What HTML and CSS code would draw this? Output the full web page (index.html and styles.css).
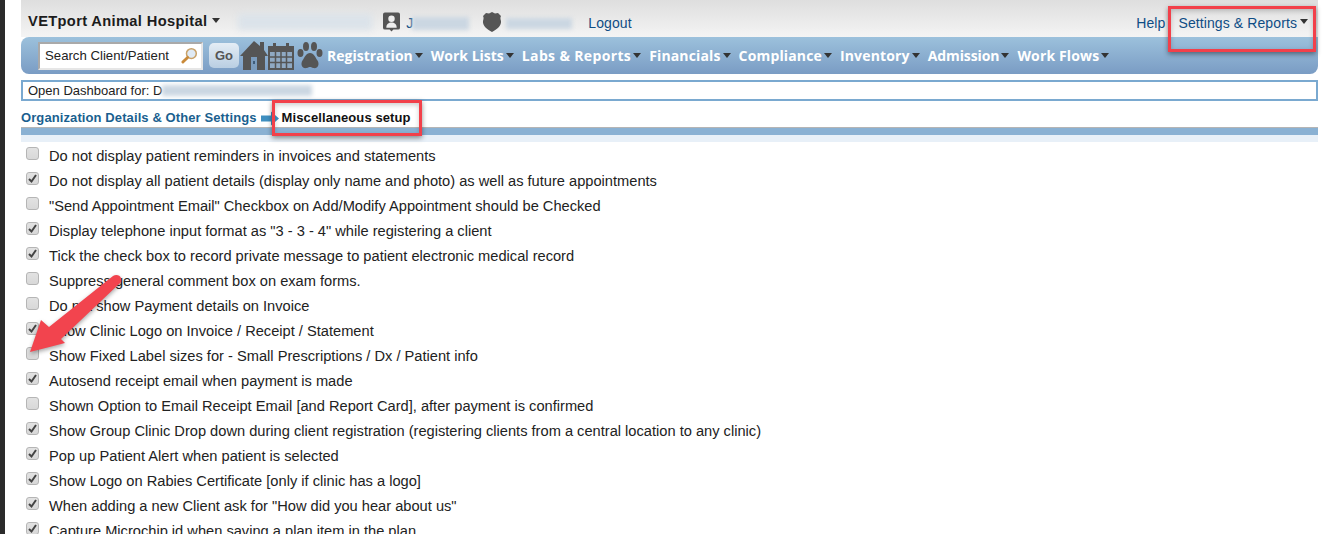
FILE: index.html
```html
<!DOCTYPE html>
<html lang="en">
<head>
  <meta charset="UTF-8">
  <title>VETport - Miscellaneous setup</title>
  <link rel="stylesheet" href="styles.css">
</head>
<body>
  <div class="page">
    <!-- Top bar -->
    <div class="topbar">
      <span class="clinic">VETport Animal Hospital</span>
      <span class="caret caret-top"></span>
      <span class="smudge smudge-date"></span>
      <svg class="icon-user" viewBox="0 0 18 20"><path fill="#555" d="M2 0h14a2 2 0 0 1 2 2v14a2 2 0 0 1-2 2h-5l-2 2-2-2H2a2 2 0 0 1-2-2V2a2 2 0 0 1 2-2z"/><circle cx="9" cy="6.500" r="3.400" fill="#eee"/><path fill="#eee" d="M3.500 16c0-4 2.500-5.500 5.500-5.500s5.500 1.500 5.500 5.500z"/></svg>
      <span class="link link-initial">J</span>
      <span class="smudge smudge-user"></span>
      <svg class="icon-shield" viewBox="0 0 20 20"><path fill="#555" d="M10 0l3 1.500 3-.5 3 3c-1 2-.5 3 0 5 .5 4-3 8-9 11C4 17 .5 13 1 9c.5-2 1-3 0-5l3-3 3 .5z"/></svg>
      <span class="smudge smudge-doctor"></span>
      <a class="link link-logout">Logout</a>
      <a class="link link-help">Help</a>
      <a class="link link-settings">Settings &amp; Reports</a>
      <span class="caret caret-settings"></span>
    </div>

    <!-- Main navigation -->
    <div class="navbar">
      <div class="search-box">
        <span>Search Client/Patient</span>
        <svg class="icon-search" viewBox="0 0 18 18"><circle cx="11" cy="7" r="5.200" fill="#dfeaf5" stroke="#c9a26a" stroke-width="1.600"/><path d="M7 11l-5 5" stroke="#c98a3a" stroke-width="3" stroke-linecap="round"/></svg>
      </div>
      <button class="go-btn">Go</button>
      <svg class="icon-home" viewBox="0 0 28 29"><path fill="#555" d="M14 0l6 5V1h4v8l4 6h-3v14H3V15H0z"/><path fill="#7b9cbd" d="M11 16h6v13h-6z"/><path fill="#3f5d7a" d="M13 20h2v3h-2z"/></svg>
      <svg class="icon-cal" viewBox="0 0 26 28"><path fill="#555" d="M0 4h5V1h3v3h10V1h3v3h5v24H0z"/><path fill="#8fa9c3" d="M2 10h22v16H2z"/><path stroke="#555" stroke-width="1.500" d="M2 15h22M2 20.500h22M7.500 10v16M13 10v16M18.500 10v16"/></svg>
      <svg class="icon-paw" viewBox="0 0 26 28"><g fill="#555"><ellipse cx="3.500" cy="11" rx="3" ry="4"/><ellipse cx="9" cy="4.500" rx="3" ry="4.500"/><ellipse cx="17" cy="4.500" rx="3" ry="4.500"/><ellipse cx="22.500" cy="11" rx="3" ry="4"/><path d="M13 11c4 0 5 4 7.500 7.500 2.500 4 0 8.500-4 7.500-2-.5-2.500-1-3.500-1s-1.500.5-3.500 1c-4 1-6.500-3.500-4-7.500C8 15 9 11 13 11z"/></g></svg>
      <a class="nav-item">Registration</a>
      <a class="nav-item">Work Lists</a>
      <a class="nav-item nav-wide">Labs &amp; Reports</a>
      <a class="nav-item nav-loose">Financials</a>
      <a class="nav-item nav-loose">Compliance</a>
      <a class="nav-item nav-loose">Inventory</a>
      <a class="nav-item nav-tight">Admission</a>
      <a class="nav-item nav-loose">Work Flows</a>
    </div>

    <!-- Patient dashboard -->
    <div class="dashboard">
      <span>Open Dashboard for: D</span>
      <span class="smudge smudge-patient"></span>
    </div>

    <!-- Breadcrumb -->
    <div class="breadcrumb">
      <a class="crumb-link">Organization Details &amp; Other Settings</a>
      <svg class="crumb-arrow" viewBox="0 0 18 14"><path fill="#3f8fc0" d="M0 4h10V0l8 7-8 7v-4H0z"/></svg>
      <span class="crumb-current">Miscellaneous setup</span>
    </div>
    <div class="section-bar"></div>

    <!-- Settings list -->
    <ul class="settings">
      <li><input type="checkbox"><span>Do not display patient reminders in invoices and statements</span></li>
      <li><input type="checkbox" checked><span>Do not display all patient details (display only name and photo) as well as future appointments</span></li>
      <li><input type="checkbox"><span>"Send Appointment Email" Checkbox on Add/Modify Appointment should be Checked</span></li>
      <li><input type="checkbox" checked><span>Display telephone input format as "3 - 3 - 4" while registering a client</span></li>
      <li><input type="checkbox" checked><span>Tick the check box to record private message to patient electronic medical record</span></li>
      <li><input type="checkbox"><span>Suppress general comment box on exam forms.</span></li>
      <li><input type="checkbox"><span>Do not show Payment details on Invoice</span></li>
      <li><input type="checkbox" checked><span>Show Clinic Logo on Invoice / Receipt / Statement</span></li>
      <li><input type="checkbox"><span>Show Fixed Label sizes for - Small Prescriptions / Dx / Patient info</span></li>
      <li><input type="checkbox" checked><span>Autosend receipt email when payment is made</span></li>
      <li><input type="checkbox"><span>Shown Option to Email Receipt Email [and Report Card], after payment is confirmed</span></li>
      <li><input type="checkbox" checked><span>Show Group Clinic Drop down during client registration (registering clients from a central location to any clinic)</span></li>
      <li><input type="checkbox" checked><span>Pop up Patient Alert when patient is selected</span></li>
      <li><input type="checkbox" checked><span>Show Logo on Rabies Certificate [only if clinic has a logo]</span></li>
      <li><input type="checkbox" checked><span>When adding a new Client ask for "How did you hear about us"</span></li>
      <li><input type="checkbox" checked><span>Capture Microchip id when saving a plan item in the plan</span></li>
    </ul>
  </div>

  <!-- Screenshot annotations -->
  <div class="callout callout-settings"></div>
  <div class="callout callout-misc"></div>
  <svg class="callout-arrow" viewBox="0 0 100 85"><path fill="#f2444e" d="M6 80L17 48l8 7L89 4c3-2 7-1 8 2s0 5-2 6L37 67l4 4z"/></svg>
</body>
</html>
```

FILE: styles.css
```css
/* Global */
html, body {
  height: 100%;
  overflow: hidden;
}
body {
  margin: 0;
  background: #fff;
  border-left: 5px solid #2b2b2b;
  font-family: "Liberation Sans", Arial, sans-serif;
  font-size: 14px;
  color: #222;
}
.page {
  margin-left: 16px;
  width: 1297px;
}

/* Blurred-out personal details */
.smudge {
  display: block;
  flex: none;
  background: #cbd7e2;
  filter: blur(2px);
}
.caret {
  flex: none;
  width: 0;
  height: 0;
  border-left: 4px solid transparent;
  border-right: 4px solid transparent;
  border-top: 5px solid #333;
}

/* Top bar */
.topbar {
  height: 37px;
  padding: 6px 0 0 7px;
  box-sizing: border-box;
  display: flex;
  align-items: center;
  background: linear-gradient(#dedede, #f4f4f4);
}
.clinic {
  margin-top: -2px;
  font-weight: bold;
  font-size: 14.67px;
  letter-spacing: 0.35px;
  color: #1c1c1c;
}
.caret-top {
  margin: -3px 16px 0 5px;
}
.smudge-date {
  width: 134px;
  height: 16px;
  margin: 0 11px 0 2px;
  background: #dbe3ea;
  filter: blur(3px);
}
.icon-user {
  width: 17px;
  height: 20px;
  margin-right: 6px;
}
.link {
  margin-top: 3px;
  color: #0f4d85;
  font-size: 14px;
  letter-spacing: 0.1px;
}
.link-initial {
  width: 6px;
}
.smudge-user {
  width: 57px;
  height: 13px;
  margin: 3px 13px 0 0;
}
.icon-shield {
  width: 20px;
  height: 20px;
  margin-right: 4px;
}
.smudge-doctor {
  width: 66px;
  height: 11px;
  margin: 4px 16px 0 0;
}
.link-help {
  margin-left: auto;
  margin-right: 13px;
}
.caret-settings {
  margin: 0 10px 0 3px;
}

/* Navigation */
.navbar {
  height: 37px;
  padding-left: 17px;
  box-sizing: border-box;
  display: flex;
  align-items: center;
  border-radius: 8px 0 8px 8px;
  background: linear-gradient(#9cc1dc, #7a9cc4);
}
.search-box {
  width: 165px;
  height: 28px;
  box-sizing: border-box;
  padding: 0 3px 0 5px;
  display: flex;
  align-items: center;
  justify-content: space-between;
  background: #fff;
  border: 2px solid #a9a9a9;
  border-right-color: #e6e6e6;
  border-bottom-color: #e6e6e6;
  font-size: 13.2px;
  color: #222;
}
.icon-search {
  width: 17px;
  height: 17px;
}
.go-btn {
  width: 30px;
  height: 25px;
  margin: 0 1px 0 6px;
  padding: 0;
  border: none;
  border-radius: 5px;
  background: linear-gradient(#e4edf5, #b9cee2);
  color: #555;
  font-family: "Liberation Sans", sans-serif;
  font-weight: bold;
  font-size: 13px;
}
.icon-home {
  width: 28px;
  height: 29px;
}
.icon-cal {
  width: 26px;
  height: 28px;
  margin-right: 3px;
}
.icon-paw {
  width: 26px;
  height: 28px;
  margin-right: 4px;
}
.nav-item {
  display: flex;
  align-items: center;
  margin-right: 8px;
  color: #fff;
  font-family: "Open Sans", sans-serif;
  font-weight: 700;
  font-size: 14px;
  white-space: nowrap;
}
.nav-item::after {
  content: "";
  margin-left: 2px;
  border-left: 4px solid transparent;
  border-right: 4px solid transparent;
  border-top: 5px solid #333;
}
.nav-wide {
  letter-spacing: 0.35px;
}
.nav-loose {
  letter-spacing: 0.15px;
}
.nav-tight {
  letter-spacing: -0.1px;
}

/* Dashboard input */
.dashboard {
  height: 21px;
  margin-top: 6px;
  padding-left: 5px;
  box-sizing: border-box;
  display: flex;
  align-items: center;
  border: 2px solid #7aa9d0;
  font-size: 13px;
}
.smudge-patient {
  width: 150px;
  height: 11px;
}

/* Breadcrumb */
.breadcrumb {
  height: 26px;
  padding-top: 6px;
  box-sizing: border-box;
  display: flex;
  align-items: center;
  font-size: 13px;
  font-weight: bold;
  letter-spacing: 0.1px;
}
.crumb-link {
  color: #1a5f8f;
}
.crumb-arrow {
  width: 18px;
  height: 15px;
  margin: 3px 3px 0 4px;
}
.crumb-current {
  color: #111;
}
.section-bar {
  height: 7px;
  border-top: 1px solid #b5b5b5;
  background: #8ab1d3;
  border-bottom: 7px solid #e8f0f8;
}

/* Settings list */
.settings {
  margin: 1px 0 0;
  padding: 0;
  list-style: none;
}
.settings li {
  height: 25px;
  padding-left: 5px;
  display: flex;
  align-items: center;
  font-size: 14.65px;
  color: #222;
}
.settings span {
  margin-left: 10px;
}
.settings input {
  appearance: none;
  width: 13px;
  height: 13px;
  margin: -4px 0 0 0;
  box-sizing: border-box;
  border: 1px solid #b5b5b5;
  border-radius: 3px;
  background: linear-gradient(#e2e2e2, #d8d8d8);
}
.settings input:checked {
  background: url("data:image/svg+xml,%3Csvg xmlns='http://www.w3.org/2000/svg' viewBox='0 0 11 11'%3E%3Cpath d='M2 6l2.500 2.500L9 2' fill='none' stroke='%23444' stroke-width='2'/%3E%3C/svg%3E") center no-repeat, linear-gradient(#e2e2e2, #d8d8d8);
}

/* Annotations over the screenshot */
.callout {
  position: absolute;
  box-sizing: border-box;
  border: 3px solid #f2404a;
  box-shadow: 0 2px 5px rgba(0, 0, 0, 0.45), inset 0 2px 5px rgba(0, 0, 0, 0.2);
}
.callout-settings {
  left: 1168px;
  top: 6px;
  width: 148px;
  height: 46px;
}
.callout-misc {
  left: 272px;
  top: 100px;
  width: 150px;
  height: 36px;
}
.callout-arrow {
  position: absolute;
  left: 24px;
  top: 272px;
  width: 100px;
  height: 85px;
  filter: drop-shadow(0 2px 2px rgba(0, 0, 0, 0.35));
}
```
